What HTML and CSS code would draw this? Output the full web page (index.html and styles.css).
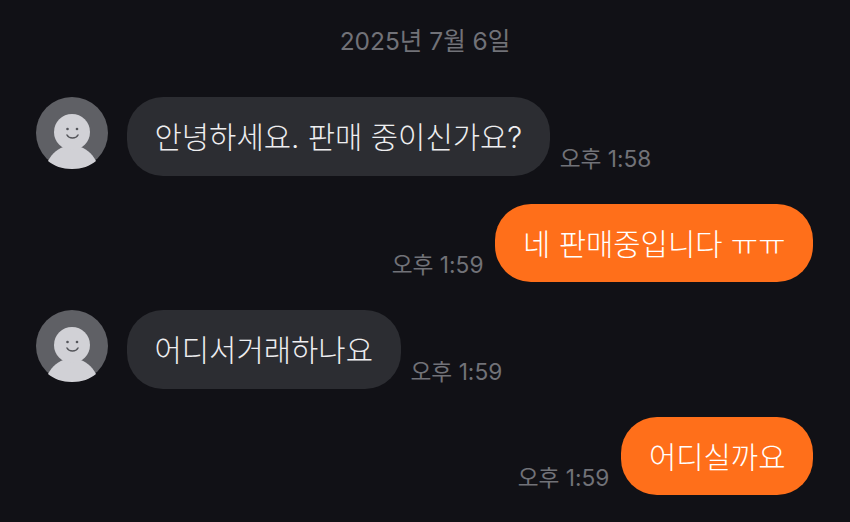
FILE: index.html
```html
<!DOCTYPE html>
<html lang="ko">
<head>
    <meta charset="UTF-8">
    <title>채팅</title>
    <link rel="stylesheet" href="styles.css">
</head>
<body>
    <div class="fecha">2025년 7월 6일</div>
    <div class="chat">
        <div class="fila">
            <svg class="avatar" viewBox="0 0 72 72">
                <circle cx="36" cy="36" r="36" fill="#5f6065"/>
                <path d="M12 64 C16 56 23 51 30 49 L42 49 C49 51 56 56 60 64 C54 69 46 72 36 72 C26 72 18 69 12 64 Z" fill="#d1d1d6"/>
                <circle cx="36" cy="35" r="18" fill="#d1d1d6"/>
                <circle cx="31.500" cy="32" r="1.300" fill="#55565b"/>
                <circle cx="41" cy="32" r="1.300" fill="#55565b"/>
                <path d="M31 38 C33 42 40 42 42 38" fill="none" stroke="#55565b" stroke-width="1.500" stroke-linecap="round"/>
            </svg>
            <div class="burbuja">안녕하세요. 판매 중이신가요?</div>
            <div class="hora">오후 1:58</div>
        </div>
        <div class="fila mia">
            <div class="hora">오후 1:59</div>
            <div class="burbuja">네 판매중입니다 ㅠㅠ</div>
        </div>
        <div class="fila">
            <svg class="avatar" viewBox="0 0 72 72">
                <circle cx="36" cy="36" r="36" fill="#5f6065"/>
                <path d="M12 64 C16 56 23 51 30 49 L42 49 C49 51 56 56 60 64 C54 69 46 72 36 72 C26 72 18 69 12 64 Z" fill="#d1d1d6"/>
                <circle cx="36" cy="35" r="18" fill="#d1d1d6"/>
                <circle cx="31.500" cy="32" r="1.300" fill="#55565b"/>
                <circle cx="41" cy="32" r="1.300" fill="#55565b"/>
                <path d="M31 38 C33 42 40 42 42 38" fill="none" stroke="#55565b" stroke-width="1.500" stroke-linecap="round"/>
            </svg>
            <div class="burbuja">어디서거래하나요</div>
            <div class="hora">오후 1:59</div>
        </div>
        <div class="fila mia">
            <div class="hora">오후 1:59</div>
            <div class="burbuja">어디실까요</div>
        </div>
    </div>
</body>
</html>
```

FILE: styles.css
```css
body {
    margin: 0;
    height: 522px;
    overflow: hidden;
    background-color: #111116;
    font-family: 'Inter', 'Noto Sans CJK KR', sans-serif;
}
.fecha {
    padding-top: 27px;
    height: 70px;
    line-height: 29px;
    box-sizing: border-box;
    text-align: center;
    font-size: 24.500px;
    color: #717278;
}
.chat {
    display: flex;
    flex-direction: column;
    gap: 28px;
    padding: 27px 37px 0 36px;
}
.fila {
    display: flex;
    align-items: flex-end;
    gap: 10px;
}
.mia {
    justify-content: flex-end;
    gap: 12px;
}
.avatar {
    width: 72px;
    height: 72px;
    align-self: flex-start;
    margin-right: 9px;
}
.burbuja {
    height: 78.500px;
    line-height: 80px;
    padding: 0 27.500px;
    border-radius: 36px;
    background-color: #2c2d32;
    color: #eeeef0;
    font-size: 29.700px;
    font-weight: 300;
    white-space: nowrap;
}
.mia .burbuja {
    background-color: #ff6f1a;
    color: #fff;
}
.hora {
    font-size: 22.700px;
    line-height: 26px;
    margin-bottom: 4px;
    color: #717278;
    white-space: nowrap;
}
```
